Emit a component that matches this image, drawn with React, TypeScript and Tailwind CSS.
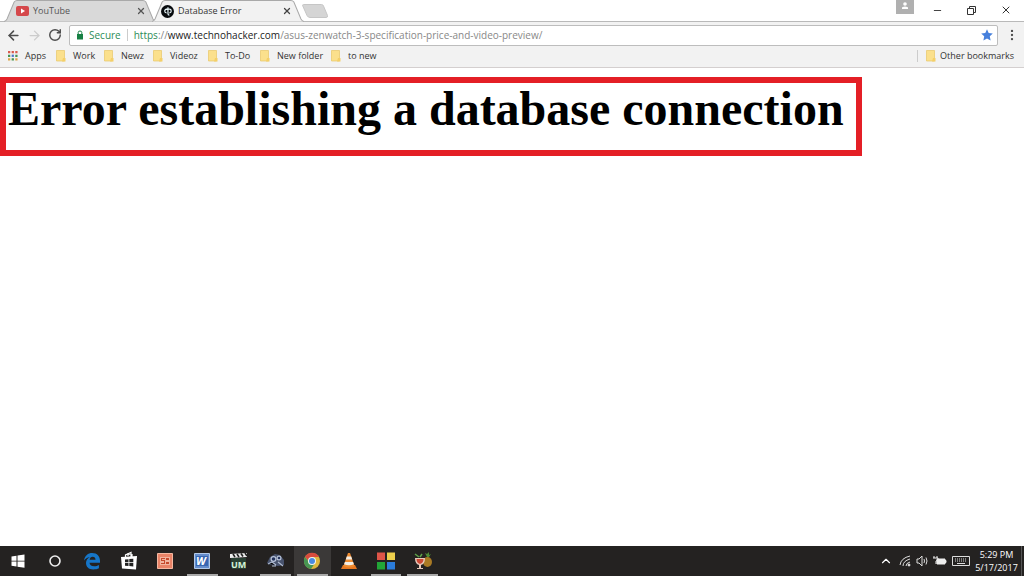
import { X, ArrowLeft, ArrowRight, RotateCw, Minus, MoreVertical, ChevronUp } from "lucide-react";
import type { ReactNode } from "react";

const bookmarks = [
  { label: "Work", width: "w-[48px]" },
  { label: "Newz", width: "w-[49px]" },
  { label: "Videoz", width: "w-[55px]" },
  { label: "To-Do", width: "w-[52px]" },
  { label: "New folder", width: "w-[71px]" },
  { label: "to new", width: "w-[60px]" },
];

function FolderIcon() {
  return (
    <svg viewBox="0 0 10 12" className="w-[10px] h-3 shrink-0">
      <path d="M.5.5h8v10.500h-8z" fill="#fbe08c" stroke="#e9c765" strokeWidth=".7" />
      <path d="M7 8l2.500 0v3.500H6z" fill="#f4cf68" />
    </svg>
  );
}

function TabShape({ fill }: { fill: string }) {
  return (
    <svg viewBox="0 0 150 22" preserveAspectRatio="none" className="absolute inset-0 w-full h-full">
      <path d="M0 21.500 Q2 21 3 19 L10 2 Q11 .5 13 .5 H137 Q139 .5 140 2 L147 19 Q148 21 150 21.500" fill={fill} stroke="#a9a9a9" />
    </svg>
  );
}

function Tabs() {
  return (
    <header className="flex h-[22px] bg-white border-b border-[#b9b9b9]">
      <div className="relative w-[152px] h-[22px] ml-1 flex items-center">
        <TabShape fill="#d9d9d9" />
        <div className="relative flex items-center w-full pl-3 pr-[10px]">
          <svg viewBox="0 0 13 10" className="w-[13px] h-[10px]">
            <rect width="13" height="10" rx="2" fill="#d5484b" />
            <path d="M5 2.500v5L9 5z" fill="#fff" />
          </svg>
          <span className="ml-1 text-[9px] text-[#555]">YouTube</span>
          <button aria-label="Close YouTube" className="ml-auto"><X className="w-[10px] h-[10px] text-[#555]" strokeWidth={3} /></button>
        </div>
      </div>
      <div className="relative w-[152px] h-[22px] -ml-1 flex items-center">
        <TabShape fill="#f2f2f2" />
        <div className="relative flex items-center w-full pl-[9px] pr-[12px]">
          <svg viewBox="0 0 14 14" className="w-[13px] h-[13px]">
            <circle cx="7" cy="7" r="7" fill="#080b0e" />
            <path d="M7.500 2.500v7q0 1.500 1.500 1.500M5 4.500h4q2 0 2 2t-2 2M7.500 4.500Q4 4.500 4 6.500t2 2" fill="none" stroke="#e7f5f8" strokeWidth="1.300" />
          </svg>
          <span className="ml-1 text-[9px] text-[#333]">Database Error</span>
          <button aria-label="Close Database Error" className="ml-auto"><X className="w-[10px] h-[10px] text-[#444]" strokeWidth={3} /></button>
        </div>
      </div>
      <button aria-label="New tab" className="w-[26px] h-[14px] mt-1 -ml-[2px]">
        <svg viewBox="0 0 26 14" className="w-[26px] h-[14px]">
          <path d="M1.500.5h18q1.500 0 2 1.500l4 9.500q.5 2-1.500 2H8q-2 0-3-2L.8 2Q.2.5 1.500.5z" fill="#d5d5d5" stroke="#c6c6c6" />
        </svg>
      </button>
      <div className="flex ml-auto text-[#333]">
        <button aria-label="Profile" className="w-[18px] h-[14px] mr-[6px] bg-[#b0b0b0]">
          <svg viewBox="0 0 18 14" className="w-[18px] h-[14px]">
            <circle cx="9" cy="4" r="1.800" fill="#fff" />
            <path d="M6 9V8q0-1.500 3-1.500T12 8v1z" fill="#fff" />
          </svg>
        </button>
        <button aria-label="Minimize" className="w-[34px] h-5 flex justify-center items-center">
          <Minus className="w-[11px] h-[11px]" />
        </button>
        <button aria-label="Restore" className="w-[34px] h-5 flex justify-center items-center">
          <svg viewBox="0 0 9 9" className="w-[9px] h-[9px]" fill="none" stroke="currentColor">
            <path d="M.5 2.500h6v6h-6zM2.500 2.500v-2h6v6h-2" />
          </svg>
        </button>
        <button aria-label="Close" className="w-[36px] h-5 flex justify-center items-center">
          <X className="w-3 h-3" strokeWidth={2} />
        </button>
      </div>
    </header>
  );
}

function Toolbar() {
  return (
    <nav className="bg-[#f2f2f2] border-b border-[#d4cfcf]">
      <div className="flex items-center h-[26px] pl-[6px] pr-[5px] text-[#4d4d4d]">
        <button aria-label="Back"><ArrowLeft className="w-[15px] h-[15px]" strokeWidth={2.5} /></button>
        <button aria-label="Forward" className="ml-[6px] text-[#ccc]"><ArrowRight className="w-[15px] h-[15px]" /></button>
        <button aria-label="Reload" className="ml-[6px]"><RotateCw className="w-[14px] h-[14px]" strokeWidth={2.5} /></button>
        <div className="flex items-center flex-1 h-[21px] ml-[7px] px-[6px] bg-white border border-[#bdbdbd] rounded-xs text-[10px] text-[#888]">
          <svg viewBox="0 0 8 10" className="w-2 h-[10px]">
            <path d="M1 4h6v5.500H1z" fill="#168044" />
            <path d="M2.200 4V2.500q0-1.500 1.800-1.500t1.800 1.500V4" fill="none" stroke="#168044" />
          </svg>
          <span className="ml-[5px] text-[#2c8b57]">Secure</span>
          <span className="w-px h-3 mx-[6px] bg-[#ccc]" />
          <span>
            <span className="text-[#2c8b57]">https</span>://<span className="text-[#222]">www.technohacker.com</span>/asus-zenwatch-3-specification-price-and-video-preview/
          </span>
          <button aria-label="Bookmark this page" className="ml-auto -mr-[2px]">
            <svg viewBox="0 0 12 12" className="w-3 h-3">
              <path d="M6 .3l1.700 3.700 4.100.5-3 2.800.8 4.200L6 9.500l-3.600 2 .8-4.200-3-2.800 4.100-.5z" fill="#4780dc" />
            </svg>
          </button>
        </div>
        <button aria-label="Menu" className="ml-[7px]"><MoreVertical className="w-[14px] h-[14px]" fill="currentColor" /></button>
      </div>
      <div className="flex items-center h-[19px] pl-2 pr-[10px] pb-1 text-[9px] text-[#333] whitespace-nowrap">
        <a href="#apps" className="flex items-center gap-[7px] w-[48px]">
          <svg viewBox="0 0 11 11" className="w-[10px] h-[10px]">
            <path d="M0 0h2.500v2.500H0zM4 0h2.500v2.500H4zM8 0h2.500v2.500H8z" fill="#d9594c" />
            <path d="M0 4h2.500v2.500H0zM8 4h2.500v2.500H8zM4 8h2.500v2.500H4z" fill="#469353" />
            <path d="M4 4h2.500v2.500H4z" fill="#4d77c8" />
            <path d="M0 8h2.500v2.500H0zM8 8h2.500v2.500H8z" fill="#dca447" />
          </svg>
          Apps
        </a>
        {bookmarks.map((bookmark) => (
          <a key={bookmark.label} href="#folder" className={`flex items-center gap-[7px] ${bookmark.width}`}>
            <FolderIcon />
            {bookmark.label}
          </a>
        ))}
        <a href="#other" className="flex items-center gap-1 h-3 ml-auto pl-2 border-l border-[#ccc]">
          <FolderIcon />
          Other bookmarks
        </a>
      </div>
    </nav>
  );
}

function WindowsLogo() {
  return <path d="M0 2l5-.8v5H0zM6 1l7-1v6.200H6zM0 7h5v5l-5-.8zM6 7h7v6.200L6 12.200z" fill="#fff" />;
}

const tasks: { name: string; open?: boolean; active?: boolean; icon: ReactNode }[] = [
  { name: "Start", icon: <g transform="translate(3.500 3.500)"><WindowsLogo /></g> },
  { name: "Cortana", icon: <circle cx="10" cy="10" r="5" fill="none" stroke="#eee" strokeWidth="1.600" /> },
  {
    name: "Edge",
    icon: <path d="M2 9.500C2.800 4.500 6 2 10.200 2c5 0 7.800 3.400 7.800 7.800v2H7.500c.2 2.500 2.200 3.500 4.700 3.500 1.900 0 3.400-.5 4.700-1.300v3.200C15.400 18 13.500 18.400 11.300 18.400 6.500 18.400 4 15.800 4 12c0-2.700 1.500-4.700 3.700-5.800C5.300 6.300 3.400 7.700 2 9.500zM7.600 8.800h5.900C13.500 6.800 12.500 5.800 10.700 5.800S7.900 7 7.600 8.800z" fill="#1676c8" />,
  },
  {
    name: "Store",
    icon: (
      <>
        <path d="M6.500 6V4l5.500-2.500V6M9 5V3l4 .5V6" fill="none" stroke="#fff" strokeWidth="1.200" />
        <path d="M2 6l16-1-1 13.500L3 17.500z" fill="#fff" />
        <path d="M6 8.500l3.500-.3v3H6zM10.300 8.100l4-.4v3.500h-4zM6 12h3.500v3L6 14.700zM10.300 12h4v3.500l-4-.4z" fill="#222" />
      </>
    ),
  },
  {
    name: "PowerPoint",
    icon: (
      <>
        <path d="M2.500 2.500h15v15h-15z" fill="#e88367" stroke="#f4b8a1" />
        <path d="M5 6h10v8H5z" fill="#f0b49f" />
        <path d="M6 7h4v1H7v1h3v4H6v-1h3v-2H6z" fill="#c5492c" />
        <path d="M11 7h3v2h-3zM11 11h3v2h-3z" fill="#c5492c" />
      </>
    ),
  },
  {
    name: "Word",
    open: true,
    icon: (
      <>
        <path d="M2.500 2.500h15v15h-15z" fill="#658dcb" stroke="#b3cae9" />
        <path d="M4 5h12v10H4z" fill="#3766b2" />
        <text x="4" y="14" fontSize="11" fontWeight="bold" fontStyle="italic" fill="#fff">W</text>
      </>
    ),
  },
  {
    name: "Movie Maker",
    icon: (
      <>
        <path d="M1 3l17-1v4L1 7z" fill="#eee" />
        <path d="M4 3l2 3M8 3l2 3M12 2.500l2 3M16 2l2 3" stroke="#222" strokeWidth="1.600" />
        <path d="M2 7h15v11H3z" fill="#294033" />
        <text x="2" y="17" fontSize="9" fontWeight="bold" fill="#d5f2d8">UM</text>
      </>
    ),
  },
  {
    name: "Camera",
    open: true,
    icon: (
      <>
        <path d="M1 12l3-6 5-3 5 1 4 5v5l-6 1-8-1z" fill="#48536d" />
        <circle cx="7.500" cy="8" r="3" fill="#b9c5da" />
        <circle cx="13" cy="7" r="2.500" fill="#b9c5da" />
        <circle cx="7.500" cy="8" r="1.800" fill="#25345d" />
        <circle cx="13" cy="7" r="1.300" fill="#25345d" />
        <path d="M2 13l4-2 4 3M12 11l5 4M6 15h4" stroke="#aebad0" strokeWidth="1.200" />
      </>
    ),
  },
  {
    name: "Chrome",
    open: true,
    active: true,
    icon: (
      <>
        <circle cx="10" cy="10" r="8" fill="#ddb73c" />
        <path d="M3 6a8 8 0 0 1 14 0H10v8z" fill="#d84c3e" />
        <path d="M3 6a8 8 0 0 0 6 12l4-6-6-1z" fill="#479653" />
        <circle cx="10" cy="10" r="4" fill="#f5f5ee" />
        <circle cx="10" cy="10" r="3" fill="#488be0" />
      </>
    ),
  },
  {
    name: "VLC",
    icon: (
      <>
        <path d="M4 14h12l2 4H2z" fill="#e87820" />
        <path d="M9 2h2l4.500 13q-5.500 3-11 0z" fill="#ee8c31" />
        <path d="M7.800 5.500h4.400l1 3H6.800zM5.900 11h8.200l.8 2.300q-4.900 2-9.800 0z" fill="#f3eee5" />
      </>
    ),
  },
  {
    name: "Office tools",
    open: true,
    icon: (
      <>
        <path d="M1 1.500h8v7.500H1z" fill="#df5548" />
        <path d="M11 1.500h8v7.500h-8z" fill="#edcf4c" />
        <path d="M1 11h8v7.500H1z" fill="#22a637" />
        <path d="M11 11h8v7.500h-8z" fill="#2b7cda" />
      </>
    ),
  },
  {
    name: "Cocktail",
    open: true,
    icon: (
      <>
        <ellipse cx="14.500" cy="11" rx="4.500" ry="5" fill="#a97a24" />
        <path d="M14 6l-2-4 2 1 2-2v3l2-1-2 3z" fill="#4d8b36" />
        <path d="M2 7h10q0 6-4 7v3h2v1H4v-1h2v-3Q2 13 2 7z" fill="#e6c9bb" />
        <path d="M3.500 8h7q0 4-3.500 5-3.500-1-3.500-5z" fill="#cc4935" />
        <path d="M2 3l4 3M9 3L7 6" stroke="#5fa34a" strokeWidth="1.500" />
      </>
    ),
  },
];

function Taskbar() {
  return (
    <footer className="flex h-[30px] bg-[#242221] text-white">
      <div className="flex w-[441px]">
        {tasks.map((task) => (
          <button key={task.name} aria-label={task.name} className={`relative flex flex-1 justify-center items-center ${task.active ? "bg-[#3b3938]" : ""}`}>
            <svg viewBox="0 0 20 20" className="w-5 h-5">{task.icon}</svg>
            {task.open && <span className="absolute bottom-0 inset-x-[3px] h-[2px] bg-[#aaa]" />}
          </button>
        ))}
      </div>
      <div className="flex items-center ml-auto">
        <button aria-label="Show hidden icons"><ChevronUp className="w-[14px] h-[14px]" /></button>
        <svg viewBox="0 0 12 12" className="w-3 h-3 ml-[6px]" fill="none" stroke="#ddd">
          <path d="M1 10Q2 3 11 1M4 11Q4 6 11 4M7 11Q7 8 11 7" />
          <circle cx="10" cy="10" r="1" fill="#fff" />
        </svg>
        <svg viewBox="0 0 13 12" className="w-[13px] h-3 ml-[5px]" fill="none" stroke="#ddd">
          <path d="M1 4h2l3-3v10L3 8H1zM8 4q1 2 0 4M10 2.500q2 3.500 0 7" />
        </svg>
        <svg viewBox="0 0 14 12" className="w-[14px] h-3 ml-1">
          <path d="M4 4h8v5H4zM12 5.500h1v2h-1z" fill="#eee" stroke="#eee" />
          <path d="M1 1v2M4 1v2M0 3h5v2L3 6v3" fill="none" stroke="#eee" />
        </svg>
        <svg viewBox="0 0 18 12" className="w-[18px] h-3 ml-[5px]" fill="none" stroke="#ddd">
          <path d="M.5 1.500h17v9H.5z" />
          <path d="M3 4h12M3 6h12" strokeDasharray="1 1" />
          <path d="M5 8.500h8" />
        </svg>
        <time dateTime="2017-05-17T17:29" className="w-[43px] ml-[5px] text-center text-[9px] leading-[13px]">
          <span className="block">5:29 PM</span>
          <span className="block">5/17/2017</span>
        </time>
        <span className="w-px h-full ml-[3px] mr-[2px] bg-[#555]" />
      </div>
    </footer>
  );
}

export default function App() {
  return (
    <div className="flex flex-col min-h-screen bg-white font-['Open_Sans','Noto_Sans',sans-serif]">
      <Tabs />
      <Toolbar />
      <main className="flex-1 pt-[9px]">
        <div className="w-fit h-[79px] border-[6px] border-[#e41f26] pl-[2px] pr-3">
          <h1 className="font-['Liberation_Serif',serif] font-bold text-[48px] leading-[52px] text-black">
            Error establishing a database connection
          </h1>
        </div>
      </main>
      <Taskbar />
    </div>
  );
}
